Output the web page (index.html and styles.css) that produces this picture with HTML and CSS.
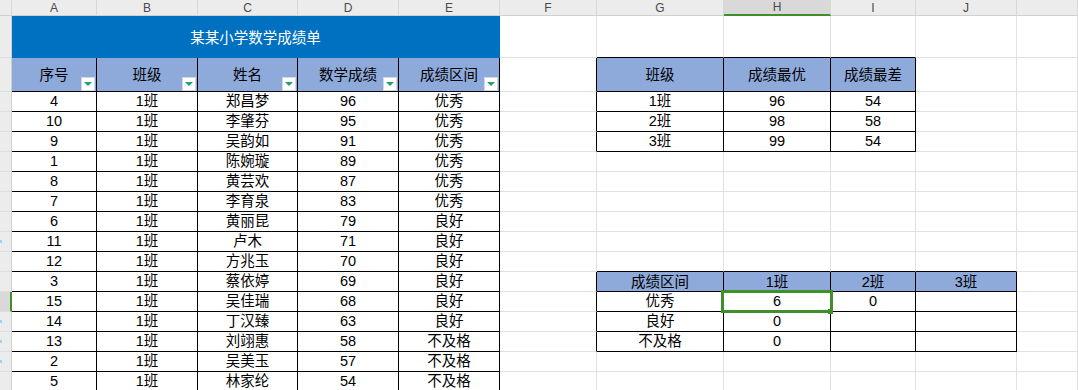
FILE: index.html
```html
<!DOCTYPE html>
<html lang="zh-CN">
<head>
    <meta charset="UTF-8">
    <meta name="viewport" content="width=device-width, initial-scale=1.0">
    <title>某某小学数学成绩单</title>
    <link rel="stylesheet" href="styles.css">
</head>
<body>
<div class="sheet">
    <!-- column letters -->
    <div class="ch"></div><div class="ch">A</div><div class="ch">B</div><div class="ch">C</div><div class="ch">D</div><div class="ch">E</div><div class="ch">F</div><div class="ch">G</div><div class="ch on">H</div><div class="ch">I</div><div class="ch">J</div><div class="ch"></div>

    <!-- title -->
    <div class="rh"></div><div class="title">某某小学数学成绩单</div><div></div><div class="bb"></div><div class="bb"></div><div class="bb"></div><div></div><div></div>

    <!-- headers -->
    <div class="rh"></div>
    <div class="hd bk">序号<span class="fb"></span></div>
    <div class="hd bk">班级<span class="fb"></span></div>
    <div class="hd bk">姓名<span class="fb"></span></div>
    <div class="hd bk">数学成绩<span class="fb"></span></div>
    <div class="hd bk">成绩区间<span class="fb"></span></div>
    <div class="br"></div>
    <div class="hd bk">班级</div><div class="hd bk">成绩最优</div><div class="hd bk">成绩最差</div>
    <div></div><div></div>

    <div class="rh"></div><div class="bk">4</div><div class="bk">1班</div><div class="bk">郑昌梦</div><div class="bk">96</div><div class="bk">优秀</div>
    <div class="br"></div><div class="bk">1班</div><div class="bk">96</div><div class="bk">54</div><div></div><div></div>

    <div class="rh"></div><div class="bk">10</div><div class="bk">1班</div><div class="bk">李肇芬</div><div class="bk">95</div><div class="bk">优秀</div>
    <div class="br"></div><div class="bk">2班</div><div class="bk">98</div><div class="bk">58</div><div></div><div></div>

    <div class="rh"></div><div class="bk">9</div><div class="bk">1班</div><div class="bk">吴韵如</div><div class="bk">91</div><div class="bk">优秀</div>
    <div class="br"></div><div class="bk">3班</div><div class="bk">99</div><div class="bk">54</div><div></div><div></div>

    <div class="rh"></div><div class="bk">1</div><div class="bk">1班</div><div class="bk">陈婉璇</div><div class="bk">89</div><div class="bk">优秀</div>
    <div></div><div></div><div></div><div></div><div></div><div></div>

    <div class="rh"></div><div class="bk">8</div><div class="bk">1班</div><div class="bk">黄芸欢</div><div class="bk">87</div><div class="bk">优秀</div>
    <div></div><div></div><div></div><div></div><div></div><div></div>

    <div class="rh"></div><div class="bk">7</div><div class="bk">1班</div><div class="bk">李育泉</div><div class="bk">83</div><div class="bk">优秀</div>
    <div></div><div></div><div></div><div></div><div></div><div></div>

    <div class="rh"></div><div class="bk">6</div><div class="bk">1班</div><div class="bk">黄丽昆</div><div class="bk">79</div><div class="bk">良好</div>
    <div></div><div></div><div></div><div></div><div></div><div></div>

    <div class="rh"><i class="dot"></i></div><div class="bk">11</div><div class="bk">1班</div><div class="bk">卢木</div><div class="bk">71</div><div class="bk">良好</div>
    <div></div><div></div><div></div><div></div><div></div><div></div>

    <div class="rh"></div><div class="bk">12</div><div class="bk">1班</div><div class="bk">方兆玉</div><div class="bk">70</div><div class="bk">良好</div>
    <div></div><div class="bb"></div><div class="bb"></div><div class="bb"></div><div class="bb"></div><div></div>

    <div class="rh"></div><div class="bk">3</div><div class="bk">1班</div><div class="bk">蔡依婷</div><div class="bk">69</div><div class="bk">良好</div>
    <div class="br"></div><div class="hd bk">成绩区间</div><div class="hd bk">1班</div><div class="hd bk">2班</div><div class="hd bk">3班</div><div></div>

    <div class="rh on"></div><div class="bk">15</div><div class="bk">1班</div><div class="bk">吴佳瑞</div><div class="bk">68</div><div class="bk">良好</div>
    <div class="br"></div><div class="bk">优秀</div><div class="bk">6<span class="pick"></span></div><div class="bk">0</div><div class="bk"></div><div></div>

    <div class="rh"><i class="dot"></i></div><div class="bk">14</div><div class="bk">1班</div><div class="bk">丁汉臻</div><div class="bk">63</div><div class="bk">良好</div>
    <div class="br"></div><div class="bk">良好</div><div class="bk">0</div><div class="bk"></div><div class="bk"></div><div></div>

    <div class="rh"><i class="dot"></i></div><div class="bk">13</div><div class="bk">1班</div><div class="bk">刘翊惠</div><div class="bk">58</div><div class="bk">不及格</div>
    <div class="br"></div><div class="bk">不及格</div><div class="bk">0</div><div class="bk"></div><div class="bk"></div><div></div>

    <div class="rh"><i class="dot"></i></div><div class="bk">2</div><div class="bk">1班</div><div class="bk">吴美玉</div><div class="bk">57</div><div class="bk">不及格</div>
    <div></div><div></div><div></div><div></div><div></div><div></div>

    <div class="rh"></div><div class="bk">5</div><div class="bk">1班</div><div class="bk">林家纶</div><div class="bk">54</div><div class="bk">不及格</div>
    <div></div><div></div><div></div><div></div><div></div><div></div>
</div>
</body>
</html>
```

FILE: styles.css
```css
body {
    margin: 0;
    background-color: #fff;
    font-family: "Liberation Sans", "Noto Sans CJK SC", sans-serif;
    overflow: hidden;
}
.sheet {
    display: grid;
    grid-template-columns: 12px 85px 101px 100px 101px 101px 97px 127px 107px 85px 101px 1fr;
    grid-template-rows: 16px 42px 34px repeat(15, 20px);
    font-size: 14.5px;
    color: #000;
}
.sheet > * {
    box-sizing: border-box;
    position: relative;
    display: flex;
    align-items: center;
    justify-content: center;
    line-height: 1;
    white-space: nowrap;
    border-right: 1px solid #e1e1e1;
    border-bottom: 1px solid #e1e1e1;
}
.ch {
    background-color: #ececec;
    border-right-color: #d8d8d8;
    border-bottom-color: #d0d0d0;
    font-size: 12px;
    color: #4a4a4a;
}
.ch.on {
    background-color: #d9d9d9;
    border-bottom: 2px solid #3f8f2a;
}
.rh {
    background-color: #ececec;
    border-right-color: #d0d0d0;
    border-bottom-color: #dddddd;
}
.rh.on {
    background-color: #d9d9d9;
    border-right: 2px solid #3f8f2a;
}
.dot {
    position: absolute;
    left: 0;
    top: 8px;
    width: 2px;
    height: 3px;
    background-color: #9fd3f2;
}
.title {
    grid-column: span 5;
    background-color: #0070c0;
    border-right-color: #0070c0;
    border-bottom-color: #0070c0;
    color: #fff;
    padding-top: 3px;
}
.hd {
    background-color: #8eaadb;
    padding-top: 2px;
}
.bk {
    border-right-color: #000;
    border-bottom-color: #000;
}
.br {
    border-right-color: #000;
}
.bb {
    border-bottom-color: #000;
}
.fb {
    position: absolute;
    right: 1px;
    bottom: 0;
    width: 14px;
    height: 14px;
    box-sizing: border-box;
    background-color: #fff;
    border: 1px solid #d3d9e3;
}
.fb::after {
    content: "";
    position: absolute;
    left: 50%;
    top: 4px;
    transform: translateX(-50%);
    border-left: 4px solid transparent;
    border-right: 4px solid transparent;
    border-top: 4px solid #1fa36b;
}
.pick {
    position: absolute;
    z-index: 1;
    left: -3px;
    top: -2px;
    width: 112px;
    height: 23px;
    box-sizing: border-box;
    border: 3px solid #3f8f2a;
}
.pick::after {
    content: "";
    position: absolute;
    right: -3px;
    bottom: -4px;
    width: 5px;
    height: 5px;
    background-color: #3f8f2a;
}
```
